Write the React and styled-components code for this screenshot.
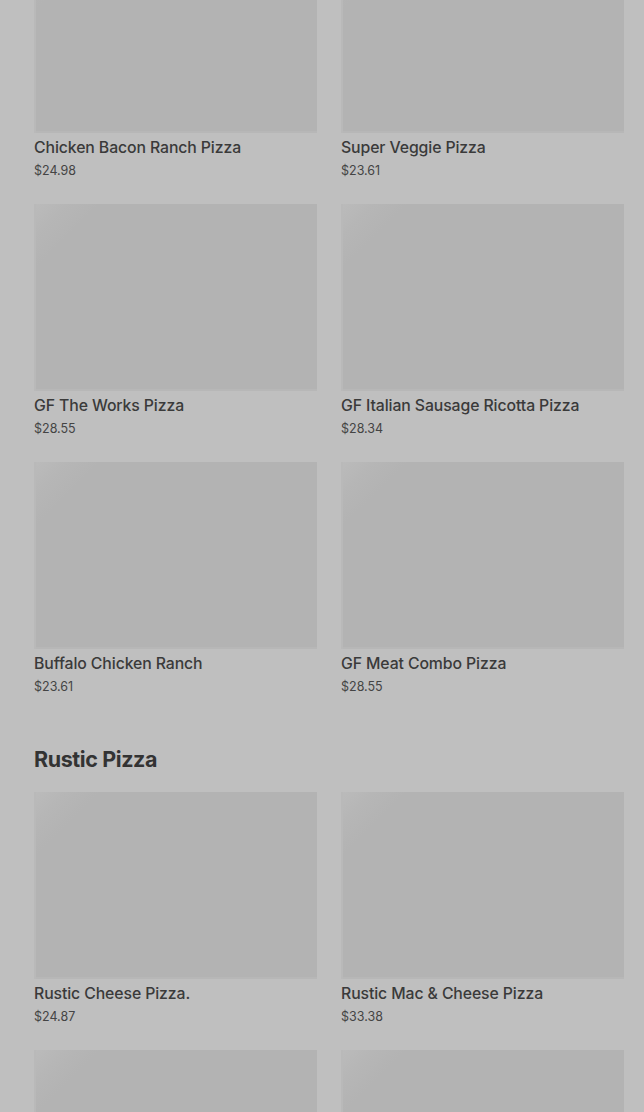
import React from 'react'
import styled, { createGlobalStyle } from 'styled-components'

const GlobalStyle = createGlobalStyle`
  html, body {
    margin: 0;
    padding: 0;
    background: #bfbfbf;
    font-family: Inter, "Liberation Sans", sans-serif;
    color: #3b3b3b;
    overflow: hidden;
  }
`

const Page = styled.div`
  padding: 0 20px 0 34px;
  height: 1112px;
  overflow: hidden;
`

const Section = styled.section`
  margin-top: ${p => (p.$first ? '-54px' : '45px')};
`

const SectionTitle = styled.h2`
  margin: 0 0 17px;
  font-size: 21.5px;
  line-height: 32px;
  font-weight: 700;
  letter-spacing: -0.4px;
  color: #333;
`

const Grid = styled.div`
  display: grid;
  grid-template-columns: 1fr 1fr;
  column-gap: 24px;
  row-gap: 22px;
`

const Card = styled.div`
  display: flex;
  flex-direction: column;
`

const Thumb = styled.div`
  height: 187px;
  background: linear-gradient(135deg, #bbbbbb 0%, #b6b6b6 7%, #b3b3b3 14%, #b3b3b3 100%);
  box-shadow: inset 2px 0 0 #b9b9b9, inset 0 -2px 0 #b7b7b7;
`

const Name = styled.div`
  margin-top: 4px;
  font-size: 15.8px;
  line-height: 22px;
  font-weight: 500;
  letter-spacing: -0.1px;
  color: #3a3a3a;
`

const Price = styled.div`
  font-size: 12.5px;
  line-height: 23px;
  color: #444;
`

const sections = [
  {
    items: [
      ['Chicken Bacon Ranch Pizza', '$24.98'],
      ['Super Veggie Pizza', '$23.61'],
      ['GF The Works Pizza', '$28.55'],
      ['GF Italian Sausage Ricotta Pizza', '$28.34'],
      ['Buffalo Chicken Ranch', '$23.61'],
      ['GF Meat Combo Pizza', '$28.55'],
    ],
  },
  {
    title: 'Rustic Pizza',
    items: [
      ['Rustic Cheese Pizza.', '$24.87'],
      ['Rustic Mac & Cheese Pizza', '$33.38'],
      [null, null],
      [null, null],
    ],
  },
]

export default function App() {
  return (
    <>
      <GlobalStyle />
      <Page>
        {sections.map((s, i) => (
          <Section key={i} $first={i === 0}>
            {s.title && <SectionTitle>{s.title}</SectionTitle>}
            <Grid>
              {s.items.map(([name, price], j) => (
                <Card key={j}>
                  <Thumb />
                  {name && <Name>{name}</Name>}
                  {price && <Price>{price}</Price>}
                </Card>
              ))}
            </Grid>
          </Section>
        ))}
      </Page>
    </>
  )
}
